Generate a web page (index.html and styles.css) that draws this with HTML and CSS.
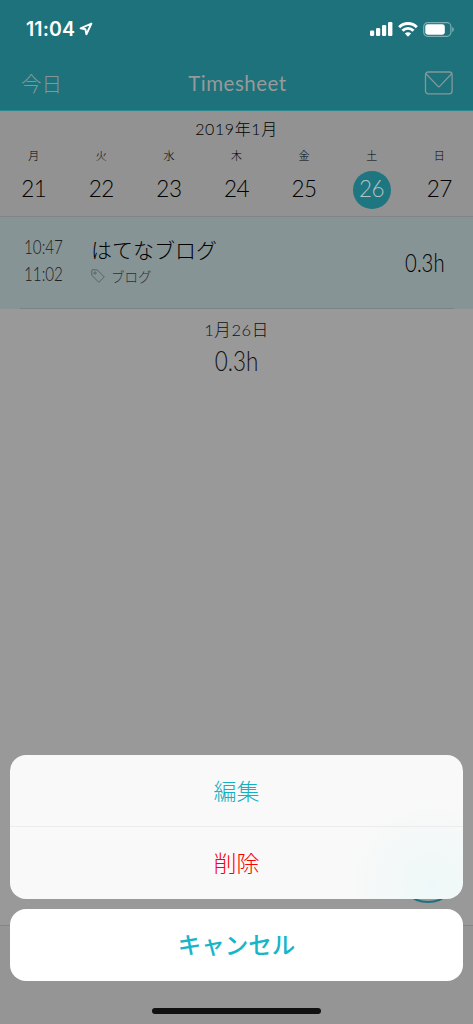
FILE: index.html
```html
<!DOCTYPE html>
<html lang="ja">
  <head>
    <meta charset="UTF-8" />
    <meta name="viewport" content="width=device-width, initial-scale=1.0" />
    <title>Timesheet</title>
    <link rel="stylesheet" href="styles.css">
  </head>

  <body>
    <div class="screen">
      <header class="header">
        <div class="status-bar">
          <span class="clock">11:04</span>
          <svg class="location" width="14" height="14" viewBox="0 0 14 14">
            <path d="M12.4 1.5 L1.6 6.3 L6.4 7.3 L7.4 12.3 Z" fill="none" stroke="#fff" stroke-width="1.9" stroke-linejoin="round" />
          </svg>
          <div class="status-icons">
            <svg width="23" height="14" viewBox="0 0 23 14" fill="#fff">
              <rect x="0" y="8.5" width="4.2" height="5.5" rx="1.2" />
              <rect x="6" y="6" width="4.2" height="8" rx="1.2" />
              <rect x="12" y="3" width="4.2" height="11" rx="1.2" />
              <rect x="18" y="0" width="4.4" height="14" rx="1.2" />
            </svg>
            <svg width="20" height="15" viewBox="0 0 20 15" fill="none" stroke="#fff" stroke-width="2.9">
              <path d="M1.2 5.3 C6 .3 14 .3 18.8 5.3" />
              <path d="M4.5 8.8 C7.6 5.6 12.4 5.6 15.5 8.8" />
              <path d="M10 14.7 L6.9 11.6 C8.6 9.9 11.4 9.9 13.1 11.6 Z" fill="#fff" stroke="none" />
            </svg>
            <svg width="32" height="15" viewBox="0 0 32 15">
              <rect x=".7" y=".7" width="27.2" height="13.6" rx="4" fill="none" stroke="#7daeb3" stroke-width="1.2" />
              <rect x="2.3" y="2.3" width="19.5" height="10.4" rx="2.4" fill="#fff" />
              <path d="M29.2 5 C31.4 5.8 31.4 9.2 29.2 10 Z" fill="#7daeb3" />
            </svg>
          </div>
        </div>
        <nav class="nav">
          <span class="today">今日</span>
          <h1 class="title">Timesheet</h1>
          <svg class="mail" width="30" height="24" viewBox="0 0 30 24" fill="none" stroke="#849899" stroke-width="1.3">
            <rect x="1.5" y="1" width="26.6" height="21.8" rx="2.8" />
            <path d="M2.2 3 L14 15.4 Q14.8 16.2 15.6 15.4 L27.4 3" />
          </svg>
        </nav>
      </header>

      <section class="calendar">
        <div class="month">2019年1月</div>
        <div class="week">
          <div class="day"><span class="weekday">月</span><span class="date">21</span></div>
          <div class="day"><span class="weekday">火</span><span class="date">22</span></div>
          <div class="day"><span class="weekday">水</span><span class="date">23</span></div>
          <div class="day"><span class="weekday">木</span><span class="date">24</span></div>
          <div class="day"><span class="weekday">金</span><span class="date">25</span></div>
          <div class="day"><span class="weekday">土</span><span class="date selected">26</span></div>
          <div class="day"><span class="weekday">日</span><span class="date">27</span></div>
        </div>
      </section>

      <section class="entry">
        <div class="times">
          <span>10:47</span>
          <span>11:02</span>
        </div>
        <div class="task">
          <div class="task-name">はてなブログ</div>
          <div class="tag">
            <svg width="14" height="14" viewBox="0 0 14 14" fill="none" stroke="#525e5f" stroke-width=".9" stroke-linejoin="round">
              <path d="M.7 2 Q.7 .7 2 .7 L6.4 1 L13.3 8 L7.8 13.3 L.9 6.4 Z" />
              <circle cx="4" cy="4" r="1.1" />
            </svg>
            <span>ブログ</span>
          </div>
        </div>
        <span class="hours">0.3h</span>
      </section>

      <section class="total">
        <div class="total-date">1月26日</div>
        <div class="total-hours">0.3h</div>
      </section>

      <div class="add-button"></div>
      <div class="toolbar"></div>

      <div class="action-sheet">
        <div class="actions">
          <button class="action edit">編集</button>
          <button class="action delete">削除</button>
        </div>
        <button class="action cancel">キャンセル</button>
        <div class="home-indicator"></div>
      </div>
    </div>
  </body>
</html>
```

FILE: styles.css
```css
* {
  box-sizing: border-box;
}

body {
  margin: 0;
  font-family: Lato, "Noto Sans CJK JP", sans-serif;
}

.screen {
  position: relative;
  display: flex;
  flex-direction: column;
  width: 473px;
  height: 1024px;
  background-color: #999;
  font-weight: 300;
  overflow: hidden;
}

.header {
  height: 111px;
  background-color: #1e727b;
  border-bottom: 1px solid #2c8890;
}

.status-bar {
  display: flex;
  align-items: center;
  height: 58px;
  padding: 0 18px 0 26px;
}

.clock {
  font-family: Inter, sans-serif;
  font-size: 19.5px;
  font-weight: 600;
  letter-spacing: 0.1px;
  color: #fff;
}

.location {
  margin-left: 4px;
}

.status-icons {
  display: flex;
  align-items: center;
  gap: 5px;
  margin-left: auto;
}

.nav {
  display: grid;
  grid-template-columns: 1fr auto 1fr;
  align-items: center;
  height: 50px;
  padding: 0 19px 0 21px;
}

.today {
  font-size: 20.5px;
  color: #849899;
}

.title {
  margin: 0;
  font-size: 20.5px;
  font-weight: 400;
  letter-spacing: 0.5px;
  color: #999;
}

.mail {
  justify-self: end;
}

.calendar {
  height: 106px;
  padding-top: 6px;
  background-color: #929292;
  border-bottom: 1px solid #818585;
  color: #000;
}

.month {
  height: 25px;
  font-size: 16px;
  line-height: 24px;
  letter-spacing: 0.6px;
  text-align: center;
}

.week {
  display: grid;
  grid-template-columns: repeat(7, 1fr);
}

.day {
  display: flex;
  flex-direction: column;
  align-items: center;
}

.weekday {
  height: 29px;
  font-size: 11px;
  line-height: 28px;
}

.date {
  width: 38px;
  height: 38px;
  border-radius: 50%;
  font-size: 22.5px;
  line-height: 36px;
  letter-spacing: -0.5px;
  text-align: center;
}

.selected {
  background-color: #1e7680;
  color: #b0c4c6;
}

.entry {
  display: flex;
  height: 92px;
  padding: 16px 28px 0 24px;
  background: linear-gradient(#768486, #768486) 20px 100% / 434px 1px no-repeat #879495;
}

.times {
  display: flex;
  flex-direction: column;
  width: 67px;
  font-size: 19.5px;
  line-height: 27px;
  color: #1c2020;
  transform: scaleX(0.78);
  transform-origin: left;
}

.task-name {
  height: 33px;
  font-size: 21px;
  line-height: 34px;
  color: #000;
}

.tag {
  display: flex;
  align-items: center;
  gap: 6px;
  height: 20px;
  font-size: 13.5px;
  color: #2b3131;
}

.hours,
.total-hours {
  font-size: 26px;
  line-height: 30px;
  transform: scaleX(0.78);
}

.hours {
  margin: 14px 0 0 auto;
  color: #000;
  transform-origin: right;
}

.total {
  padding-top: 9px;
  text-align: center;
  color: #111;
}

.total-date {
  height: 28px;
  font-size: 16.5px;
  line-height: 25px;
  letter-spacing: 0.6px;
}

.total-hours {
  font-size: 27px;
  transform: scaleX(0.83);
}

/* floating button, mostly covered by the sheet */
.add-button {
  position: absolute;
  right: 14px;
  bottom: 121px;
  width: 62px;
  height: 62px;
  border: 2px solid #1e727b;
  border-radius: 50%;
}

.toolbar {
  height: 99px;
  margin-top: auto;
  background-color: #959595;
  border-top: 1px solid #858585;
}

.action-sheet {
  position: absolute;
  right: 10px;
  bottom: 10px;
  left: 10px;
  display: flex;
  flex-direction: column;
  align-items: center;
}

.actions {
  width: 100%;
  border-radius: 16px;
  background: radial-gradient(circle at 422px 130px, #eff8f8 0, #f4f8f8 45px, #f9f9f9 90px);
  overflow: hidden;
}

.action {
  display: block;
  width: 100%;
  height: 72px;
  padding: 0;
  border: none;
  background: none;
  font-family: inherit;
  font-size: 23px;
  font-weight: 300;
  line-height: 72px;
  text-align: center;
  cursor: pointer;
}

.edit {
  border-bottom: 1px solid #ececec;
  color: #14b0c1;
}

.delete {
  color: #ff0000;
}

.cancel {
  margin-top: 10px;
  border-radius: 16px;
  background-color: #fff;
  font-size: 23.5px;
  font-weight: 500;
  color: #17b5c8;
}

.home-indicator {
  width: 169px;
  height: 6px;
  margin-top: 27px;
  border-radius: 3px;
  background-color: #111;
}
```
